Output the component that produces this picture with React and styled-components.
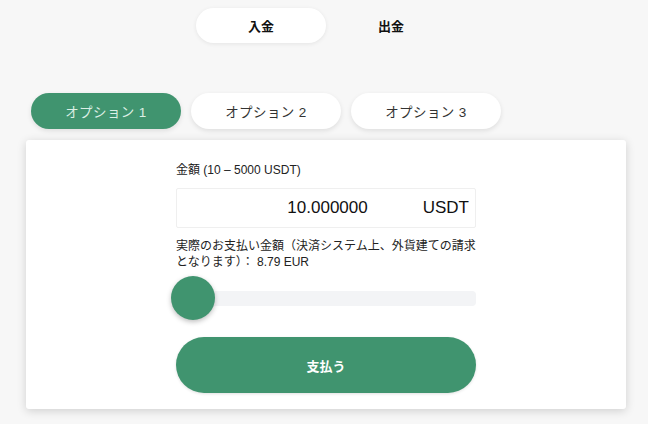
import React from "react";
import styled, { createGlobalStyle } from "styled-components";

const GREEN = "#40946f";

const Global = createGlobalStyle`
  html, body { margin: 0; padding: 0; background: #f7f7f7; }
  body { font-family: "Liberation Sans", "Noto Sans CJK JP", sans-serif; color: #222; }
`;

const Page = styled.div`
  width: 648px;
  height: 424px;
  padding-top: 8px;
  box-sizing: border-box;
  overflow: hidden;
`;

const TopTabs = styled.div`
  display: flex;
  justify-content: center;
  padding-left: 4px;
`;

const TopTab = styled.div`
  width: 130px;
  height: 35px;
  border-radius: 18px;
  display: flex;
  align-items: center;
  justify-content: center;
  font-size: 13px;
  font-weight: 700;
  color: #111;
  background: ${(p) => (p.$active ? "#fff" : "transparent")};
  box-shadow: ${(p) => (p.$active ? "0 1px 4px rgba(0,0,0,0.08)" : "none")};
`;

const Options = styled.div`
  display: flex;
  gap: 10px;
  margin: 50px 0 0 31px;
`;

const Option = styled.div`
  width: 150px;
  height: 36px;
  border-radius: 18px;
  display: flex;
  align-items: center;
  justify-content: center;
  font-size: 13.5px;
  letter-spacing: 0.4px;
  color: ${(p) => (p.$active ? "#dcefe5" : "#333")};
  background: ${(p) => (p.$active ? GREEN : "#fff")};
  box-shadow: 0 2px 5px rgba(0, 0, 0, 0.1);
`;

const Card = styled.div`
  margin: 11px 0 0 26px;
  width: 600px;
  height: 269px;
  box-sizing: border-box;
  background: #fff;
  border-radius: 3px;
  box-shadow: 0 2px 10px rgba(0, 0, 0, 0.16);
  padding: 22px 0 0;
  display: flex;
  justify-content: center;
`;

const Form = styled.div`
  width: 300px;
  display: flex;
  flex-direction: column;
`;

const Label = styled.div`
  font-size: 12px;
  line-height: 16px;
  color: #222;
`;

const AmountBox = styled.div`
  margin-top: 10px;
  height: 40px;
  box-sizing: border-box;
  border: 1px solid #efefef;
  border-radius: 2px;
  display: flex;
  align-items: center;
  padding-right: 6px;
`;

const AmountValue = styled.div`
  flex: 1;
  text-align: right;
  font-size: 17px;
  color: #111;
`;

const Unit = styled.div`
  margin-left: 55px;
  font-size: 17px;
  color: #111;
`;

const Note = styled.div`
  margin-top: 10px;
  font-size: 12px;
  line-height: 16px;
  color: #222;
  width: 301px;
`;

const Slider = styled.div`
  position: relative;
  margin-top: 6px;
  height: 44px;
  display: flex;
  align-items: center;
`;

const Track = styled.div`
  width: 100%;
  height: 15px;
  border-radius: 4px;
  background: #f3f4f6;
`;

const Thumb = styled.div`
  position: absolute;
  left: -5px;
  top: 0;
  width: 44px;
  height: 44px;
  border-radius: 50%;
  background: ${GREEN};
  box-shadow: 0 2px 5px rgba(0, 0, 0, 0.25);
`;

const PayButton = styled.div`
  margin-top: 17px;
  height: 56px;
  border-radius: 28px;
  background: ${GREEN};
  color: #fff;
  font-size: 13px;
  font-weight: 700;
  display: flex;
  align-items: center;
  justify-content: center;
  box-shadow: 0 1px 3px rgba(0, 0, 0, 0.12);
`;

export default function App() {
  return (
    <Page>
      <Global />
      <TopTabs>
        <TopTab $active>入金</TopTab>
        <TopTab>出金</TopTab>
      </TopTabs>
      <Options>
        <Option $active>オプション 1</Option>
        <Option>オプション 2</Option>
        <Option>オプション 3</Option>
      </Options>
      <Card>
        <Form>
          <Label>金額 (10 – 5000 USDT)</Label>
          <AmountBox>
            <AmountValue>10.000000</AmountValue>
            <Unit>USDT</Unit>
          </AmountBox>
          <Note>
            実際のお支払い金額（決済システム上、外貨建ての請求となります）： 8.79 EUR
          </Note>
          <Slider>
            <Track />
            <Thumb />
          </Slider>
          <PayButton>支払う</PayButton>
        </Form>
      </Card>
    </Page>
  );
}
